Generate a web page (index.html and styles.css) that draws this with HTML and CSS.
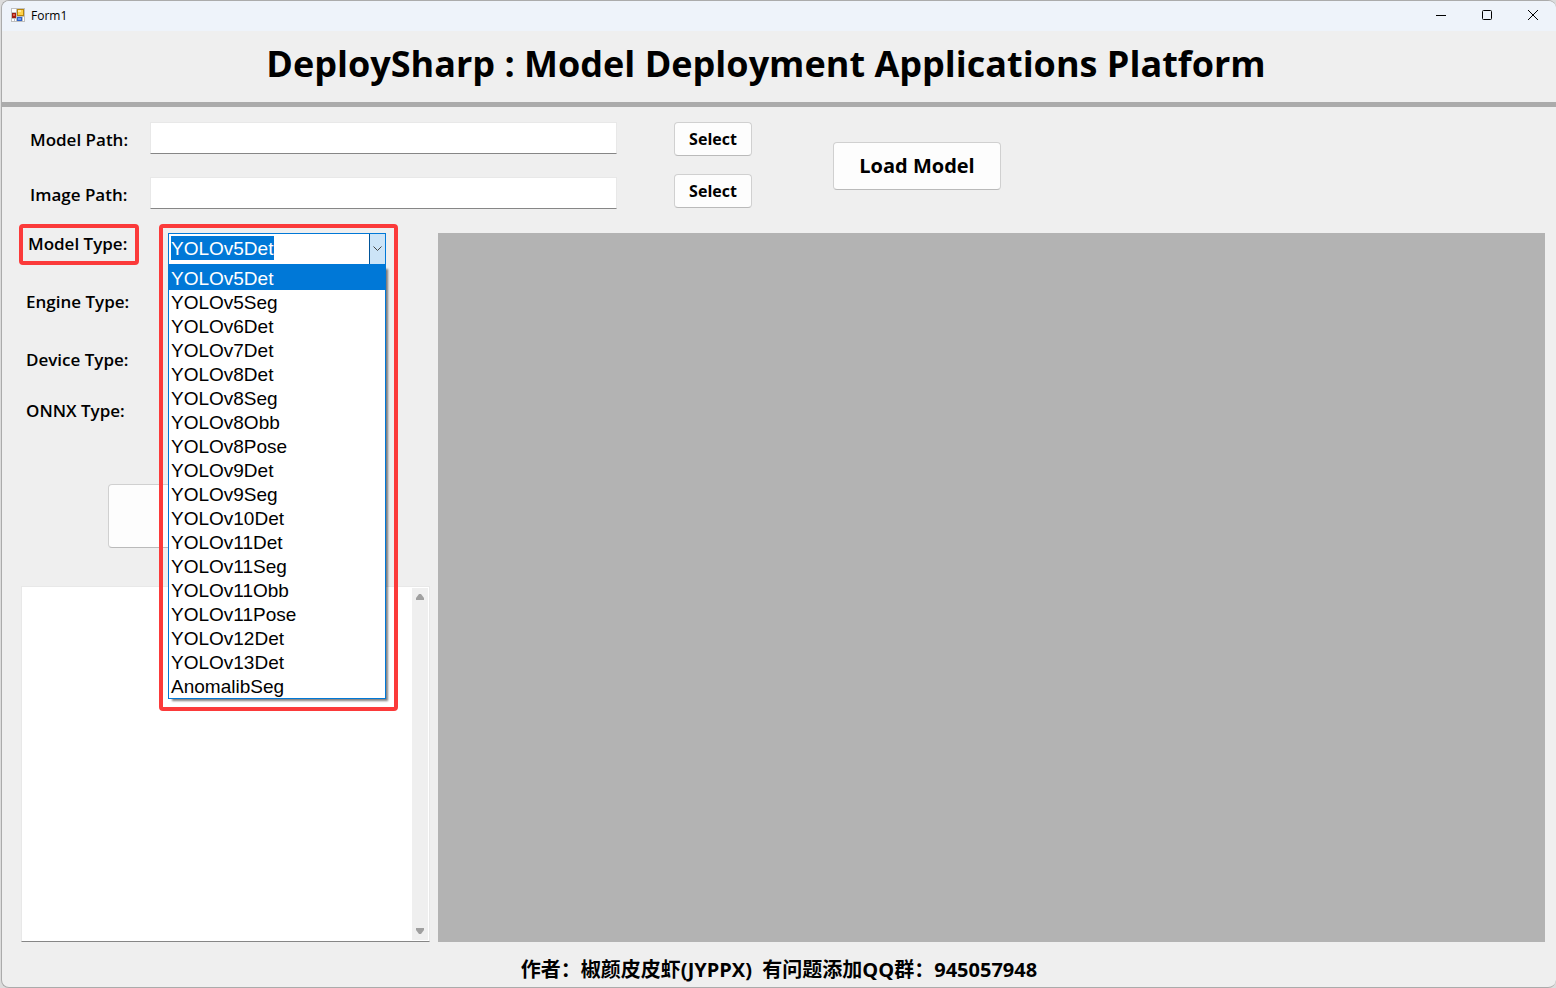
FILE: index.html
```html
<!DOCTYPE html>
<html lang="en">
<head>
    <meta charset="UTF-8">
    <meta name="viewport" content="width=device-width, initial-scale=1.0">
    <title>Form1</title>

    <link rel="stylesheet" href="styles.css">
</head>
<body>

    <div class="window">
        <div class="titlebar">
            <svg class="app-icon" width="14" height="14" viewBox="0 0 14 14">
                <rect x="0" y="0" width="14" height="14" fill="#bfbfbf"/>
                <path d="M1 1h4v3H1zM1 11h2v2H1zM4 11h1v2H4zM12 9h1v4h-1z" fill="#fff"/>
                <rect x="1" y="5" width="4" height="5" fill="#a01c12"/>
                <rect x="2" y="6" width="2" height="2" fill="#e0604c"/>
                <rect x="6" y="1" width="7" height="7" fill="#b8860b"/>
                <rect x="7" y="2" width="5" height="5" fill="#ffd24a"/>
                <rect x="7" y="2" width="3" height="2" fill="#ffe9a0"/>
                <rect x="6" y="9" width="5" height="4" fill="#2f62c8"/>
                <rect x="7" y="10" width="3" height="2" fill="#6f9bf0"/>
            </svg>
            <span class="caption">Form1</span>
            <div class="window-buttons">
                <button type="button" aria-label="Minimize">
                    <svg width="10" height="10" viewBox="0 0 10 10"><path d="M0 5.5h10" stroke="#000" fill="none"/></svg>
                </button>
                <button type="button" aria-label="Maximize">
                    <svg width="10" height="10" viewBox="0 0 10 10"><rect x="0.5" y="0.5" width="9" height="9" rx="1" stroke="#000" fill="none"/></svg>
                </button>
                <button type="button" aria-label="Close">
                    <svg width="10" height="10" viewBox="0 0 10 10"><path d="M0 0l10 10M10 0L0 10" stroke="#000" fill="none"/></svg>
                </button>
            </div>
        </div>

        <header class="header">
            <h1>DeploySharp : Model Deployment Applications Platform</h1>
        </header>

        <div class="paths">
            <div class="fields">
                <div class="field">
                    <label for="modelPath">Model Path:</label>
                    <input type="text" id="modelPath">
                </div>
                <div class="field">
                    <label for="imagePath">Image Path:</label>
                    <input type="text" id="imagePath">
                </div>
            </div>
            <div class="select-buttons">
                <button type="button" class="btn">Select</button>
                <button type="button" class="btn">Select</button>
            </div>
            <button type="button" class="btn load">Load Model</button>
        </div>

        <main class="main">
            <div class="side">
                <div class="settings">
                    <label class="marked" for="modelType">Model Type:</label>
                    <div class="combo">
                        <div class="callout">
                            <div class="combo-face">
                                <select id="modelType">
                                    <option selected>YOLOv5Det</option>
                                    <option>YOLOv5Seg</option>
                                    <option>YOLOv6Det</option>
                                    <option>YOLOv7Det</option>
                                    <option>YOLOv8Det</option>
                                    <option>YOLOv8Seg</option>
                                    <option>YOLOv8Obb</option>
                                    <option>YOLOv8Pose</option>
                                    <option>YOLOv9Det</option>
                                    <option>YOLOv9Seg</option>
                                    <option>YOLOv10Det</option>
                                    <option>YOLOv11Det</option>
                                    <option>YOLOv11Seg</option>
                                    <option>YOLOv11Obb</option>
                                    <option>YOLOv11Pose</option>
                                    <option>YOLOv12Det</option>
                                    <option>YOLOv13Det</option>
                                    <option>AnomalibSeg</option>
                                </select>
                                <span class="arrow">
                                    <svg width="9" height="6" viewBox="0 0 9 6"><path d="M0.5 0.5l4 4 4-4" stroke="#444" fill="none"/></svg>
                                </span>
                            </div>
                            <ul class="options" role="listbox" aria-label="Model Type">
                                <li role="option" aria-selected="true" class="active">YOLOv5Det</li>
                                <li role="option">YOLOv5Seg</li>
                                <li role="option">YOLOv6Det</li>
                                <li role="option">YOLOv7Det</li>
                                <li role="option">YOLOv8Det</li>
                                <li role="option">YOLOv8Seg</li>
                                <li role="option">YOLOv8Obb</li>
                                <li role="option">YOLOv8Pose</li>
                                <li role="option">YOLOv9Det</li>
                                <li role="option">YOLOv9Seg</li>
                                <li role="option">YOLOv10Det</li>
                                <li role="option">YOLOv11Det</li>
                                <li role="option">YOLOv11Seg</li>
                                <li role="option">YOLOv11Obb</li>
                                <li role="option">YOLOv11Pose</li>
                                <li role="option">YOLOv12Det</li>
                                <li role="option">YOLOv13Det</li>
                                <li role="option">AnomalibSeg</li>
                            </ul>
                        </div>
                    </div>

                    <label for="engineType">Engine Type:</label>
                    <select id="engineType" class="plain"></select>

                    <label for="deviceType">Device Type:</label>
                    <select id="deviceType" class="plain"></select>

                    <label for="onnxType">ONNX Type:</label>
                    <select id="onnxType" class="plain"></select>
                </div>

                <button type="button" class="btn run" aria-label="Run"></button>

                <div class="log">
                    <textarea aria-label="Log" readonly></textarea>
                    <div class="scrollbar">
                        <svg width="10" height="6" viewBox="0 0 10 6"><path d="M4 0h2l3 4v2H1V4z" fill="#a0a0a0"/></svg>
                        <svg width="10" height="6" viewBox="0 0 10 6"><path d="M1 0h8v2L6 6H4L1 2z" fill="#a0a0a0"/></svg>
                    </div>
                </div>
            </div>

            <div class="viewer"></div>
        </main>

        <footer class="footer">作者：椒颜皮皮虾(JYPPX)&nbsp; 有问题添加QQ群：945057948</footer>
    </div>

</body>
</html>
```
FILE: styles.css
```css
* {
    box-sizing: border-box;
}

body {
    margin: 0;
    background-color: #dcdcdc;
    color: #000;
    font-family: "Open Sans", "Noto Sans CJK SC", sans-serif;
    font-size: 16px;
    font-weight: 700;
}

.window {
    display: flex;
    flex-direction: column;
    height: 100vh;
    margin-left: 1px;
    border: 1px solid #ababab;
    border-right: none;
    border-radius: 8px;
    background-color: #efefef;
    overflow: hidden;
}

.titlebar {
    display: flex;
    align-items: center;
    height: 30px;
    padding: 0 0 2px 9px;
    background-color: #eef3fa;
}

.caption {
    flex: 1;
    margin-left: 6px;
    font-size: 12px;
    font-weight: 400;
}

.window-buttons {
    display: flex;
}

.window-buttons button {
    display: flex;
    align-items: center;
    justify-content: center;
    width: 46px;
    height: 28px;
    padding: 0;
    border: none;
    background: none;
}

.header {
    height: 76px;
    padding-right: 26px;
    border-bottom: 5px solid #ababab;
    text-align: center;
}

.header h1 {
    margin: 0;
    font-size: 36px;
    font-weight: 700;
    line-height: 66px;
}

.paths {
    display: flex;
    align-items: flex-start;
    height: 117px;
    padding: 15px 28px 0;
}

.fields {
    display: flex;
    flex-direction: column;
    gap: 23px;
}

.field {
    display: flex;
    align-items: center;
}

label {
    font-size: 17px;
    font-weight: 600;
}

.field label {
    width: 120px;
    padding-top: 2px;
}

.field input {
    width: 467px;
    height: 32px;
    padding: 0 6px;
    border: 1px solid #e8e8e8;
    border-bottom-color: #868686;
    background-color: #fff;
    font: inherit;
}

.btn {
    border: 1px solid #d0d0d0;
    border-bottom-color: #bababa;
    border-radius: 4px;
    background-color: #fdfdfd;
    color: #000;
    font: inherit;
}

.select-buttons {
    display: flex;
    flex-direction: column;
    gap: 18px;
    margin-left: 57px;
}

.select-buttons .btn {
    width: 78px;
    height: 34px;
    padding: 0;
}

.load {
    width: 168px;
    height: 48px;
    margin: 20px 0 0 81px;
    padding: 0 0 2px;
    font-size: 20px;
}

.main {
    display: flex;
    flex: 1;
    min-height: 0;
    padding-right: 11px;
}

.side {
    display: flex;
    flex-direction: column;
    width: 436px;
    padding: 0 9px 0 17px;
}

.settings {
    display: grid;
    grid-template-columns: 149px 218px;
    grid-template-rows: 41px 72px 45px 56px;
    align-items: center;
}

.settings label {
    padding-left: 7px;
}

.settings .marked {
    justify-self: start;
    width: 120px;
    height: 41px;
    padding-left: 5px;
    border: 4px solid #fb3a3a;
    border-radius: 4px;
    line-height: 32px;
}

.plain {
    height: 32px;
    border: 1px solid #adadad;
    background-color: #fff;
}

.combo {
    position: relative;
    height: 41px;
}

/* floats over the rows below while the list is open */
.callout {
    position: absolute;
    top: 0;
    left: -9px;
    z-index: 1;
    padding: 5px 8px 8px 5px;
    border: 4px solid #fb3a3a;
    border-radius: 4px;
}

.combo-face {
    display: flex;
    width: 218px;
    height: 32px;
    border: 1px solid #0078d7;
    background-color: #fff;
}

.combo-face select {
    flex: 1;
    min-width: 0;
    margin: 0;
    padding: 0 2px;
    border: none;
    appearance: none;
    background: linear-gradient(#0078d7, #0078d7) 2px 2px / 103px 24px no-repeat;
    color: #fff;
    font-family: "Liberation Sans", sans-serif;
    font-size: 19px;
    line-height: 28px;
}

.arrow {
    display: flex;
    align-items: center;
    justify-content: center;
    width: 16px;
    border-left: 1px solid #005499;
    background-color: #cce4f7;
}

.options {
    width: 218px;
    margin: 0;
    padding: 0;
    border: 1px solid #0078d7;
    background-color: #fff;
    box-shadow: 3px 3px 2px -1px rgba(0, 0, 0, 0.5);
    font-family: "Liberation Sans", sans-serif;
    font-size: 19px;
    font-weight: 400;
    line-height: 22px;
    list-style: none;
}

.options li {
    padding: 2px 0 0 2px;
}

.options .active {
    background-color: #0078d7;
    color: #fff;
}

.run {
    width: 270px;
    height: 64px;
    margin: 46px 0 38px 89px;
}

.log {
    display: flex;
    flex: 1;
    min-height: 0;
    width: 409px;
    padding: 1px;
    margin-left: 2px;
    border: 1px solid #e8e8e8;
    border-bottom-color: #868686;
    background-color: #fff;
}

.log textarea {
    flex: 1;
    border: none;
    background: none;
    font: inherit;
    outline: none;
    resize: none;
}

.scrollbar {
    display: flex;
    flex-direction: column;
    align-items: center;
    justify-content: space-between;
    width: 16px;
    padding: 6px 0;
    background-color: #efefef;
}

.viewer {
    flex: 1;
    margin-top: 9px;
    background-color: #b3b3b3;
}

.footer {
    height: 45px;
    font-size: 20px;
    line-height: 56px;
    text-align: center;
}
```
